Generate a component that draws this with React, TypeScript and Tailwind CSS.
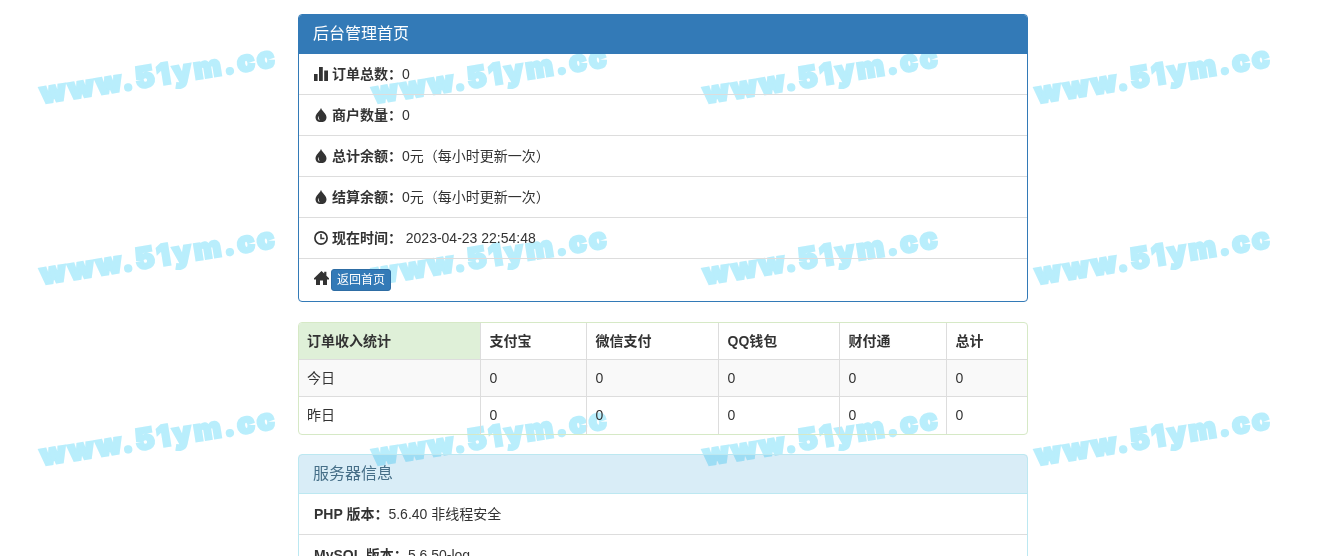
const font = 'font-["Liberation_Sans","Noto_Sans_CJK_SC",sans-serif]';

function StatsIcon() {
  return (
    <svg viewBox="0 0 14 14" className="inline-block w-[14px] h-[14px] align-[-2px] fill-[#333]">
      <rect x="0" y="7" width="3.6" height="7" />
      <rect x="5" y="0" width="3.8" height="14" />
      <rect x="10.2" y="3.5" width="3.8" height="10.5" />
    </svg>
  );
}

function TintIcon() {
  return (
    <svg viewBox="0 0 14 14" className="inline-block w-[14px] h-[14px] align-[-2px]">
      <path
        fill="#333"
        d="M7 -0.5C7.4 2.8 12.5 5.4 12.5 9.4 12.5 12.2 10.2 14.2 7 14.2S1.5 12.2 1.5 9.4C1.5 5.4 6.6 2.8 7 -0.5Z"
      />
      <path fill="#fff" d="M4.4 7.8C3.4 9.8 3.9 11.6 6 12.6 4.9 11 4.5 9.8 4.4 7.8Z" />
    </svg>
  );
}

function TimeIcon() {
  return (
    <svg viewBox="0 0 14 14" className="inline-block w-[14px] h-[14px] align-[-2px] fill-none stroke-[#333]">
      <circle cx="7" cy="7" r="6.1" strokeWidth="1.7" />
      <path d="M7 3v4.6h3.4" strokeWidth="1.5" />
    </svg>
  );
}

function HomeIcon() {
  return (
    <svg viewBox="0 0 15 14" className="inline-block w-[15px] h-[14px] align-[-1px] fill-[#333]">
      <path d="M7.5 0 0 7.2v1.4h2V14h4V9.6h3V14h4V8.6h2V7.2l-2.6-2.5V.8h-2.2v1.8L7.5 0Z" />
    </svg>
  );
}

function Row({ children }: { children: React.ReactNode }) {
  return <li className="px-[15px] py-[10px] border-t border-[#ddd] first:border-t-0 h-[41px] first:h-[40px]">{children}</li>;
}

const columns = ['订单收入统计', '支付宝', '微信支付', 'QQ钱包', '财付通', '总计'];
const rows = [
  { name: '今日', striped: true },
  { name: '昨日', striped: false },
];
const widths = ['w-[181px]', 'w-[106px]', 'w-[132px]', 'w-[121px]', 'w-[107px]', 'w-[81px]'];

export default function App() {
  return (
    <div lang="zh-CN" className={`relative isolate h-screen overflow-hidden bg-white text-[14px] leading-[20px] text-[#333] ${font}`}>
      {/* watermark tiles sit behind the panels */}
      <div className="absolute inset-0 -z-10 overflow-hidden pointer-events-none">
        <div className="grid grid-cols-[repeat(4,331.5px)] auto-rows-[181px] -ml-[7px] -mt-[16px]">
          {Array.from({ length: 12 }).map((_, i) => (
            <div key={i} className="flex items-center justify-center">
              <span className='-rotate-[9deg] whitespace-nowrap font-["Inter",sans-serif] font-black text-[29px] leading-none tracking-[2.7px] text-[#b9eefc] [-webkit-text-stroke:2.5px_#b9eefc]'>
                www.51ym.cc
              </span>
            </div>
          ))}
        </div>
      </div>

      <div className="w-[730px] ml-[298px] pt-[14px]">
        <div className="border border-[#337ab7] rounded mb-[20px] overflow-hidden">
          <div className="bg-[#337ab7] text-white text-[16px] leading-[18px] px-[14px] py-[10px] h-[39px]">后台管理首页</div>
          <ul>
            <Row>
              <StatsIcon /> <b>订单总数：</b>0
            </Row>
            <Row>
              <TintIcon /> <b>商户数量：</b>0
            </Row>
            <Row>
              <TintIcon /> <b>总计余额：</b>0元（每小时更新一次）
            </Row>
            <Row>
              <TintIcon /> <b>结算余额：</b>0元（每小时更新一次）
            </Row>
            <Row>
              <TimeIcon /> <b>现在时间：</b> 2023-04-23 22:54:48
            </Row>
            <li className="pl-[15px] pt-[10px] border-t border-[#ddd] h-[43px]">
              <HomeIcon />
              <a className="inline-block ml-[2px] bg-[#337ab7] border border-[#2e6da4] rounded-[3px] text-white text-[12px] leading-[20px] px-[5px]">
                返回首页
              </a>
            </li>
          </ul>
        </div>

        <div className="border border-[#d6e9c6] rounded mb-[19px] overflow-hidden">
          <table className="w-full table-fixed border-collapse">
            <thead>
              <tr>
                {columns.map((c, i) => (
                  <th
                    key={c}
                    className={`text-left font-bold p-[8px] h-[36px] border-l first:border-l-0 border-[#ddd] ${widths[i]} ${i === 0 ? 'bg-[#dff0d8]' : 'pl-[9px]'}`}
                  >
                    {c}
                  </th>
                ))}
              </tr>
            </thead>
            <tbody>
              {rows.map((r) => (
                <tr key={r.name} className={r.striped ? 'bg-[#f9f9f9]' : ''}>
                  <td className="p-[8px] h-[37px] border-t border-[#ddd]">{r.name}</td>
                  {[0, 1, 2, 3, 4].map((n) => (
                    <td key={n} className="p-[8px] pl-[9px] h-[37px] border-t border-l border-[#ddd]">0</td>
                  ))}
                </tr>
              ))}
            </tbody>
          </table>
        </div>

        <div className="border border-[#bce8f1] rounded overflow-hidden">
          <div className="bg-[#d9edf7] mix-blend-multiply border-b border-[#bce8f1] text-[#466f88] text-[16px] leading-[18px] px-[14px] py-[10px] h-[39px]">服务器信息</div>
          <ul>
            <Row>
              <b>PHP 版本：</b>5.6.40 非线程安全
            </Row>
            <Row>
              <b>MySQL 版本：</b>5.6.50-log
            </Row>
          </ul>
        </div>
      </div>
    </div>
  );
}
